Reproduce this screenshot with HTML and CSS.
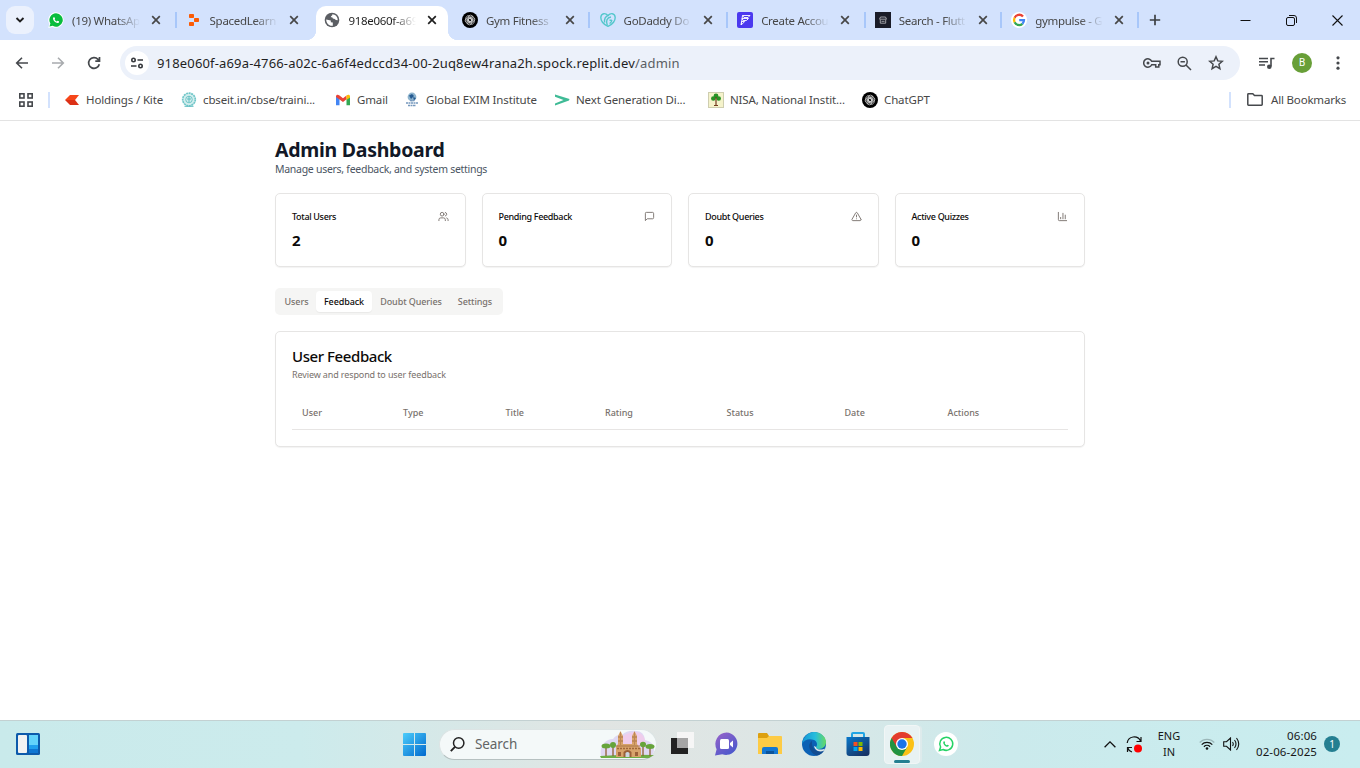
FILE: index.html
```html
<!DOCTYPE html>
<html lang="en">
<head>
<meta charset="utf-8">
<title>Admin Dashboard</title>
<link rel="stylesheet" href="styles.css">
</head>
<body>
<svg class="defs" width="0" height="0">
  <defs>
    <symbol id="x" viewBox="0 0 10 10"><path d="M1.200 1.200 8.800 8.800M8.800 1.200 1.200 8.800" fill="none" stroke="currentColor" stroke-width="1.700"/></symbol>
    <symbol id="phone" viewBox="0 0 24 24"><path d="M8.200 6.700c-.5 0-1.700.8-1.700 2.600 0 3.400 4.600 8.200 8.400 8.200 1.500 0 2.800-.9 2.800-2.300 0-.5-.1-.6-.5-.8l-2-.9c-.7-.2-1.100 1.200-1.700 1.100-.8-.2-3.800-2.500-4-3.700 0-.5.9-.9.7-1.500l-.9-2.200c-.1-.4-.6-.5-1.100-.5z" fill="currentColor"/></symbol>
    <symbol id="gpt" viewBox="0 0 16 16"><circle cx="8" cy="8" r="8" fill="#000"/><g fill="none" stroke="#dedede" stroke-width=".7"><rect x="6" y="3.200" width="5" height="6.400" rx="2.400"/><rect x="6" y="3.200" width="5" height="6.400" rx="2.400" transform="rotate(60 8 8)"/><rect x="6" y="3.200" width="5" height="6.400" rx="2.400" transform="rotate(120 8 8)"/><rect x="6" y="3.200" width="5" height="6.400" rx="2.400" transform="rotate(180 8 8)"/><rect x="6" y="3.200" width="5" height="6.400" rx="2.400" transform="rotate(240 8 8)"/><rect x="6" y="3.200" width="5" height="6.400" rx="2.400" transform="rotate(300 8 8)"/></g></symbol>
  </defs>
</svg>

<div class="tabstrip">
  <div class="tab-search"><svg width="10" height="10" viewBox="0 0 10 10"><path d="M1.500 3 5 6.500 8.500 3" fill="none" stroke="#1f1f1f" stroke-width="1.900"/></svg></div>
  <div class="tabs">
    <div class="tab">
      <svg class="fav" viewBox="0 0 16 16"><path d="M8 .3a7.700 7.700 0 1 1-3.500 14.600L.3 16l1.100-4A7.700 7.700 0 0 1 8 .3z" fill="#fff"/><path d="M8 1.300a6.700 6.700 0 1 1-3.300 12.500L1.500 14.600l.9-3.100A6.700 6.700 0 0 1 8 1.300z" fill="#09bd3d"/><svg x="1.500" y="1.500" width="13" height="13" color="#fff"><use href="#phone"/></svg></svg>
      <span class="tab-title">(19) WhatsAp</span><svg class="close"><use href="#x"/></svg>
    </div>
    <div class="tab sep">
      <svg class="fav" viewBox="0 0 16 16" fill="#fb5b05"><rect x="3" y="2" width="5" height="4" rx=".8"/><rect x="8" y="6" width="5" height="4" rx=".8"/><rect x="3" y="10" width="5" height="4" rx=".8"/></svg>
      <span class="tab-title">SpacedLearn</span><svg class="close"><use href="#x"/></svg>
    </div>
    <div class="tab mid active">
      <svg class="fav" viewBox="0 0 16 16"><circle cx="8" cy="8" r="7.300" fill="#5b5e63"/><path d="M2.200 7.500 4.500 8l2.300.5v1.700l2 .3v3.200c-3.500.6-6.600-2.200-6.600-6.200zM8.300 2.200c.5 1.600-1.500 1.300-1.500 3 1.300 0 2 .1 2 1.300l1.200.2c1.200 0 1 1.700 3.700 1.600.2-3.400-2.300-5.900-5.400-6.100z" fill="#fff"/></svg>
      <span class="tab-title">918e060f-a69</span><svg class="close"><use href="#x"/></svg>
    </div>
    <div class="tab mid"><svg class="fav"><use href="#gpt"/></svg><span class="tab-title">Gym Fitness</span><svg class="close"><use href="#x"/></svg></div>
    <div class="tab mid sep">
      <svg class="fav" viewBox="0 0 16 16" fill="none" stroke="#54c7cc" stroke-width="1.400"><path d="M8 14.300C3.200 12.500.4 8.500.9 4.800 1.400 1 5.500.7 8 3.600 10.500.7 14.600 1 15.100 4.800c.5 3.700-2.300 7.700-7.100 9.500z"/><path d="M4.600 10.500C4 7 6 4 8.800 2.800M7.300 13.500C5.500 9 7 5.500 11 5M11.800 8.200H9.500M11.800 8c0 1.600-.9 2.900-2.200 3.700"/></svg>
      <span class="tab-title">GoDaddy Do</span><svg class="close"><use href="#x"/></svg>
    </div>
    <div class="tab mid sep">
      <svg class="fav" viewBox="0 0 16 16"><rect width="16" height="16" rx="2" fill="#4b39ef"/><path d="M5.500 3.500h7.500l-2 2H7zM5 6.500h6.500l-2 2H6.200zM4.500 9.500h3.200l-3.500 3.500zM5.500 3.500 4.200 13" fill="none" stroke="#fff" stroke-width=".9"/></svg>
      <span class="tab-title">Create Accou</span><svg class="close"><use href="#x"/></svg>
    </div>
    <div class="tab mid sep">
      <svg class="fav" viewBox="0 0 16 16"><rect width="16" height="16" fill="#1a1c28"/><path d="M5.500 5h5l1 2.200h-7zM5.300 7.700v3.500h5.400V7.700M6.500 9.300h3" fill="none" stroke="#bfbfc3" stroke-width=".8"/></svg>
      <span class="tab-title">Search - Flutt</span><svg class="close"><use href="#x"/></svg>
    </div>
    <div class="tab sep last">
      <svg class="fav" viewBox="0 0 16 16"><circle cx="8" cy="8" r="8" fill="#fff"/><g fill="none" stroke-width="2.300"><path d="M12 4.600A5 5 0 0 0 3.600 5.700" stroke="#ea4335"/><path d="M3.600 5.700a5 5 0 0 0 0 4.600" stroke="#fbbc05"/><path d="M3.600 10.300a5 5 0 0 0 7.800 1.500" stroke="#34a853"/><path d="M11.400 11.800A5 5 0 0 0 13 8.100H8.200" stroke="#4285f4"/></g></svg>
      <span class="tab-title">gympulse - G</span><svg class="close"><use href="#x"/></svg>
    </div>
    <div class="newtab"><svg width="12" height="12" viewBox="0 0 12 12"><path d="M6 .8v10.400M.8 6h10.400" stroke="#3c4043" stroke-width="1.700"/></svg></div>
  </div>
  <div class="winctl">
    <svg width="11" height="11" viewBox="0 0 11 11"><path d="M.5 5.500h10" stroke="#111"/></svg>
    <svg width="11" height="11" viewBox="0 0 11 11" fill="none" stroke="#111"><rect x=".5" y="2.500" width="8" height="8" rx="1.500"/><path d="M3 .5h5a2.500 2.500 0 0 1 2.500 2.500v5"/></svg>
    <svg width="11" height="11" viewBox="0 0 11 11"><path d="m.5.5 10 10m0-10-10 10" stroke="#111" stroke-width="1.100"/></svg>
  </div>
</div>

<div class="toolbar">
  <div class="nav">
    <svg width="16" height="16" viewBox="0 0 16 16" fill="none" stroke="#45484c" stroke-width="1.600"><path d="M14 8H3M8 2.700 2.700 8 8 13.300"/></svg>
    <svg width="16" height="16" viewBox="0 0 16 16" fill="none" stroke="#a8abae" stroke-width="1.600"><path d="M2 8h11M8 2.700 13.300 8 8 13.300"/></svg>
    <svg width="16" height="16" viewBox="0 0 16 16" fill="none" stroke="#45484c" stroke-width="1.700"><path d="M13.300 9.200A5.400 5.400 0 1 1 12 4.300l1.300 1.400M13.500 2v4.200H9.300"/></svg>
  </div>
  <div class="omnibox">
    <div class="site"><svg width="14" height="14" viewBox="0 0 14 14" fill="none" stroke="#36393d" stroke-width="1.600"><circle cx="3.500" cy="4" r="1.700"/><path d="M7.500 4H13M1 10h5.500"/><circle cx="10.500" cy="10" r="1.700"/></svg></div>
    <div class="url">918e060f-a69a-4766-a02c-6a6f4edccd34-00-2uq8ew4rana2h.spock.replit.dev<span>/admin</span></div>
    <div class="omni-icons">
      <svg width="18" height="12" viewBox="0 0 18 12" fill="none" stroke="#45484c" stroke-width="1.500"><path d="M8.700 4.300H17v3.400h-1.200V10h-3.100V7.700h-4A4.200 4.200 0 1 1 8.700 4.300z"/><circle cx="5" cy="6" r="1.500" fill="#45484c" stroke="none"/></svg>
      <svg width="15" height="15" viewBox="0 0 15 15" fill="none" stroke="#45484c" stroke-width="1.500"><circle cx="5.700" cy="5.700" r="4.500"/><path d="m9 9 5 5M3.500 5.700h4.400"/></svg>
      <svg width="16" height="16" viewBox="0 0 16 16" fill="none" stroke="#45484c" stroke-width="1.500"><path d="m8 1.800 1.800 4.100 4.500.4-3.400 3 1 4.400L8 11.400l-3.900 2.300 1-4.400-3.400-3 4.500-.4z"/></svg>
    </div>
  </div>
  <svg class="media" width="16" height="13" viewBox="0 0 16 13" fill="none" stroke="#45484c" stroke-width="1.600"><path d="M0 1.500h9M0 4.700h9M0 8h6M12 9.500v-8h3.500"/><circle cx="10.300" cy="9.800" r="2.300" fill="#45484c" stroke="none"/></svg>
  <div class="avatar">B</div>
  <svg class="dots" width="4" height="14" viewBox="0 0 4 14" fill="#45484c"><circle cx="2" cy="1.800" r="1.600"/><circle cx="2" cy="7" r="1.600"/><circle cx="2" cy="12.200" r="1.600"/></svg>
</div>

<div class="bookmarks">
  <svg class="apps" width="14" height="14" viewBox="0 0 14 14" fill="none" stroke="#45484c" stroke-width="1.600"><rect x=".8" y=".8" width="4.200" height="4.200"/><rect x="9" y=".8" width="4.200" height="4.200"/><rect x=".8" y="9" width="4.200" height="4.200"/><rect x="9" y="9" width="4.200" height="4.200"/></svg>
  <div class="divider"></div>
  <div class="bm b1"><svg viewBox="0 0 16 16"><path d="M6 3h9l-4 5H1z" fill="#f6461a"/><path d="M1 8h10l4 5H6z" fill="#dc3016"/></svg><span>Holdings / Kite</span></div>
  <div class="bm b2"><svg viewBox="0 0 16 16"><circle cx="8" cy="7.500" r="6.300" fill="#d4eeee" stroke="#70c6c8" stroke-width="1.700" stroke-dasharray="2 .6"/><circle cx="8" cy="7.500" r="3.300" fill="none" stroke="#70c6c8"/><path d="M8 4v6M6 7h4M3.500 14.300h9" stroke="#5ebcc0"/></svg><span>cbseit.in/cbse/traini...</span></div>
  <div class="bm b3"><svg viewBox="0 0 16 16"><path d="M1 13.200V4l3.500 2.500v6.700z" fill="#4285f4"/><path d="M15 13.200V4l-3.500 2.500v6.700z" fill="#34a853"/><path d="M1 4.500C1 2.500 3 2.300 4.500 3.500L8 6.200l3.500-2.700v3.700L8 10 1 5z" fill="#ea4335"/><path d="M11.500 3.500c1.500-1.200 3.500-1 3.500 1v1l-3.500 2.600z" fill="#fbbc04"/></svg><span>Gmail</span></div>
  <div class="bm b4"><svg viewBox="0 0 16 16"><circle cx="8" cy="5" r="4.400" fill="#8eb4ce"/><path d="M5 3.500 8 2l2 2-3 3zM9 5l3 1-2 2.500z" fill="#255a91"/><path d="M2 11h12M4 13.500h8M6 8.500h5" stroke="#7698bd" stroke-width="1.400" stroke-dasharray="2 .5"/></svg><span>Global EXIM Institute</span></div>
  <div class="bm b5"><svg viewBox="0 0 16 16"><path d="M1 2.500 15.500 7 15 8.500 1 13.500v-2L9.500 8 1 4.800z" fill="#3fbb96"/></svg><span>Next Generation Di...</span></div>
  <div class="bm b6"><svg viewBox="0 0 16 16"><rect x=".5" y=".5" width="15" height="15" fill="#f5f3cb" stroke="#cfceb0"/><circle cx="8" cy="4" r="2.400" fill="#279225"/><circle cx="5.300" cy="6.500" r="2.300" fill="#279225"/><circle cx="10.700" cy="6.500" r="2.300" fill="#279225"/><path d="M8 5v8M6 13.500h4" stroke="#743c20" stroke-width="1.200"/></svg><span>NISA, National Instit...</span></div>
  <div class="bm b7"><svg><use href="#gpt"/></svg><span>ChatGPT</span></div>
  <div class="allbm"><svg width="16" height="13" viewBox="0 0 16 13" fill="none" stroke="#45484c" stroke-width="1.500"><path d="M.8 1.500c0-.4.300-.7.700-.7h4.300l1.700 1.800h7c.4 0 .7.300.7.700v8.200c0 .4-.3.700-.7.700h-13c-.4 0-.7-.3-.7-.7z"/></svg><span>All Bookmarks</span></div>
</div>

<main class="page">
  <h1>Admin Dashboard</h1>
  <p class="sub">Manage users, feedback, and system settings</p>
  <div class="stats">
    <div class="card stat"><div class="stat-head"><span>Total Users</span><svg viewBox="0 0 24 24"><path d="M16 21v-2a4 4 0 0 0-4-4H6a4 4 0 0 0-4 4v2"/><circle cx="9" cy="7" r="4"/><path d="M22 21v-2a4 4 0 0 0-3-3.870M16 3.130a4 4 0 0 1 0 7.750"/></svg></div><b>2</b></div>
    <div class="card stat"><div class="stat-head"><span>Pending Feedback</span><svg viewBox="0 0 24 24"><path d="M21 15a2 2 0 0 1-2 2H7l-4 4V5a2 2 0 0 1 2-2h14a2 2 0 0 1 2 2z"/></svg></div><b>0</b></div>
    <div class="card stat"><div class="stat-head"><span>Doubt Queries</span><svg viewBox="0 0 24 24"><path d="m21.730 18-8-14a2 2 0 0 0-3.480 0l-8 14A2 2 0 0 0 4 21h16a2 2 0 0 0 1.730-3M12 9v4M12 17h.01"/></svg></div><b>0</b></div>
    <div class="card stat"><div class="stat-head"><span>Active Quizzes</span><svg viewBox="0 0 24 24"><path d="M3 3v16a2 2 0 0 0 2 2h16M18 17V9M13 17V5M8 17v-3"/></svg></div><b>0</b></div>
  </div>
  <div class="seg"><span class="g1">Users</span><span class="g2 on">Feedback</span><span class="g3">Doubt Queries</span><span class="g4">Settings</span></div>
  <section class="card feedback">
    <h2>User Feedback</h2>
    <p>Review and respond to user feedback</p>
    <div class="thead"><span>User</span><span>Type</span><span>Title</span><span>Rating</span><span>Status</span><span>Date</span><span>Actions</span></div>
  </section>
</main>

<footer class="taskbar">
  <svg class="widgets" width="24" height="22" viewBox="0 0 24 22"><rect width="24" height="22" rx="1.500" fill="#0d5aab"/><rect x="2" y="2" width="9" height="18" rx="1" fill="#f2f2f2"/><path d="M13 2h9v10h-9z" fill="#62d3fb"/><path d="M13 12h9v4h-9z" fill="#20a0ee"/><path d="M13 16h9v4h-9z" fill="#0e76d3"/></svg>
  <div class="center">
    <svg class="start" width="23" height="23" viewBox="0 0 23 23"><defs><linearGradient id="wg" x2="1" y2="1"><stop stop-color="#4ccdfb"/><stop offset="1" stop-color="#0069ce"/></linearGradient></defs><path d="M0 1q0-1 1-1h10v11H0zM12 0h10q1 0 1 1v10H12zM0 12h11v11H1q-1 0-1-1zM12 12h11v10q0 1-1 1H12z" fill="url(#wg)"/></svg>
    <div class="search">
      <svg width="15" height="15" viewBox="0 0 15 15" fill="none" stroke="#222" stroke-width="1.500"><circle cx="8.700" cy="6" r="5.200"/><path d="M5 9.800.8 14.200" stroke-width="1.900"/></svg>
      <span>Search</span>
      <svg class="castle" width="56" height="29" viewBox="0 0 56 29">
        <path d="M1 26C-1 17 5 9 13 9q4-5 9-4 5-5 14-4 8 0 9 9 9 2 9 9 0 6-5 7z" fill="#dfd8f3"/><path d="M19 18q0-15 16-16 10 0 11 14z" fill="#efcdec"/>
        <path d="M0 26q28-2 54-1l-5 3H1z" fill="#6dae45"/>
        <path d="M16 27V17l2-3V6l2.500-5L23 6v8h9V6l2.500-5L37 6v8l2 3 2 1v9z" fill="#d8a36b"/>
        <path d="M18 7h5M18 11h5M32 7h5M32 11h5M16 16h24" stroke="#a87446" stroke-width="1"/><path d="M17 18.500h23" stroke="#a0673a" stroke-width="1.500" stroke-dasharray="2 1"/>
        <path d="M20.500 2v13M34.500 2v13" stroke="#bd8653"/>
        <path d="M23.500 27v-5q4-4 8 0v5zM18 26v-4h3v4zM35 26v-4h3v4z" fill="#9b6038"/><path d="M25.500 27v-4q2-2 4 0v4z" fill="#cbd5df"/>
        <path d="M6 17v9M13 17v9M43 17v9M50 17v9" stroke="#8f6034" stroke-width="1.300"/><g fill="#66a43b"><ellipse cx="6" cy="16" rx="4.500" ry="2.500"/><ellipse cx="13" cy="15" rx="3" ry="3"/><ellipse cx="43" cy="14.500" rx="3" ry="2.800"/><ellipse cx="50" cy="16.500" rx="4.500" ry="2.500"/></g>
      </svg>
    </div>
    <svg class="tb taskview" viewBox="0 0 24 24"><path d="M1 6h17v16H1z" fill="#222"/><path d="M7 0h17v16H7z" fill="#f6f6f6"/><path d="M7 6h11v10H7z" fill="#a5a5a5"/></svg>
    <svg class="tb" viewBox="0 0 24 24"><defs><linearGradient id="mg" x2=".7" y2="1"><stop stop-color="#9a63c9"/><stop offset="1" stop-color="#4a58cc"/></linearGradient></defs><path d="M12.500.5a11.200 11.200 0 1 1-4.200 21.700L1 23.500l1.600-6.300A11.500 11.500 0 0 1 12.500.5z" fill="url(#mg)"/><rect x="6" y="7" width="9" height="10" rx="1.500" fill="#fff"/><path d="m16 11 3-2.500v7L16 13z" fill="#fff"/></svg>
    <svg class="tb" viewBox="0 0 24 24"><path d="M0 2q0-1 1-1h8l2 3h12v6H0z" fill="#dda010"/><path d="M0 6h9l2-2h12q1 0 1 1v17H0z" fill="#fdcb45"/><path d="M4 22v-5q0-2 2-2h12q2 0 2 2v5z" fill="#1477d2"/><path d="M8 22v-3h8v3z" fill="#0b539b"/></svg>
    <svg class="tb" viewBox="0 0 24 24"><defs><linearGradient id="eg"><stop stop-color="#1594d3"/><stop offset=".55" stop-color="#26bddd"/><stop offset="1" stop-color="#68da61"/></linearGradient></defs><circle cx="12" cy="12" r="12" fill="#0c61b5"/><path d="M0 12C1 5 6 0 12 0c7 0 12 5 12 10 0 4-3 7-7 7-2 0-4-1-3-2 2-2 1-6-2-7C7 6 2 8 0 12z" fill="url(#eg)"/><path d="M10 9c-6 4-1 13 5 14.500 3-.5 6-2.500 7-5.500-6 3-13 0-12-9z" fill="#124c91"/><path d="M14 15c-.5 2.500 6 3.500 9 1.500l-.8 2C17 21 12.500 18 12 14z" fill="#e0e8e9"/></svg>
    <svg class="tb" viewBox="0 0 24 24"><defs><linearGradient id="sg" x2=".7" y2="1"><stop stop-color="#0878cb"/><stop offset="1" stop-color="#173466"/></linearGradient></defs><path d="M6 6V2q0-1 1-1h10q1 0 1 1v4" fill="none" stroke="#21a5e5" stroke-width="2"/><path d="M.5 5h23v16q0 3-3 3h-17q-3 0-3-3z" fill="url(#sg)"/><path d="M7.500 10h4v4h-4z" fill="#f25022"/><path d="M12.500 10h4v4h-4z" fill="#7fba00"/><path d="M7.500 15h4v4h-4z" fill="#00a4ef"/><path d="M12.500 15h4v4h-4z" fill="#ffb900"/></svg>
    <div class="chrome"><svg class="tb" viewBox="0 0 24 24"><circle cx="12" cy="12" r="12" fill="#fbc116"/><path d="M12 12 1.600 6A12 12 0 0 0 12 24l5.200-9z" fill="#229342"/><path d="M1.600 6A12 12 0 0 1 22.400 6H12v6L6.800 15z" fill="#e33b2e"/><circle cx="12" cy="12" r="6" fill="#fff"/><circle cx="12" cy="12" r="4.700" fill="#1a73e8"/></svg></div>
    <svg class="tb wa" viewBox="0 0 24 24"><circle cx="12" cy="12" r="12" fill="#fff"/><path d="M5.500 18.500 6.600 15a6.500 6.500 0 1 1 2.500 2.500z" fill="none" stroke="#25d366" stroke-width="1.500"/><svg x="6" y="6" width="12" height="12" viewBox="0 0 24 24" color="#25d366"><use href="#phone"/></svg></svg>
  </div>
  <div class="tray">
    <svg class="up" width="12" height="7" viewBox="0 0 12 7"><path d="M.6 6.300 6 .9l5.400 5.400" fill="none" stroke="#111" stroke-width="1.300"/></svg>
    <svg class="sync" width="17" height="17" viewBox="0 0 17 17" fill="none" stroke="#111" stroke-width="1.200"><path d="M1.200 7A7 7 0 0 1 14.500 5M15 1v4.500h-4.500M6 16a7 7 0 0 1-4.500-4.500M6 11.500H1.500V16"/><circle cx="12" cy="12.500" r="4" fill="#f00" stroke="none"/></svg>
    <div class="lang"><span>ENG</span><span>IN</span></div>
    <svg class="wifi" width="16" height="12" viewBox="0 0 16 12" fill="none" stroke="#111" stroke-width="1.200"><path d="M.7 4.500a10 10 0 0 1 14.600 0" stroke="#9cb7b9"/><path d="M2.700 6.700a7.400 7.400 0 0 1 10.600 0M4.900 8.700a4.400 4.400 0 0 1 6.200 0"/><circle cx="8" cy="10.500" r="1.300" fill="#111" stroke="none"/></svg>
    <svg class="vol" width="17" height="14" viewBox="0 0 17 14" fill="none" stroke="#111" stroke-width="1.100"><path d="M.7 4.700h2.800L7.500 1v12L3.500 9.300H.7zM9.500 5q1.500 2 0 4M11.500 3q3 4 0 8M13.500 1q4.500 6 0 12"/></svg>
    <div class="clock"><span>06:06</span><span>02-06-2025</span></div>
    <div class="badge">1</div>
  </div>
</footer>
</body>
</html>
```

FILE: styles.css
```css
* { box-sizing: border-box; }
body { margin: 0; width: 1360px; height: 768px; overflow: hidden; display: flex; flex-direction: column; background: #fff; font-family: "Noto Sans", "Open Sans", sans-serif; font-size: 12px; color: #1f1f1f; }
svg { display: block; flex: none; }
span { white-space: nowrap; }
.defs { position: absolute; }

.tabstrip { height: 40px; flex: none; background: #d3e2fd; display: flex; }
.tab-search { width: 28px; height: 28px; margin: 6px 4px 0 6px; border-radius: 9px; background: #ebf1fd; display: flex; align-items: center; justify-content: center; }
.tabs { display: flex; width: 1160px; }
.tab { width: 137.600px; height: 40px; display: flex; align-items: center; padding-left: 10px; position: relative; color: #474747; font-size: 11.500px; letter-spacing: -.3px; }
.mid { padding-left: 11.200px; }
.fav { width: 16px; height: 16px; margin-right: 8px; }
.tab-title { width: 68px; overflow: hidden; mask-image: linear-gradient(90deg, #000 65%, transparent 100%); }
.close { width: 10px; height: 10px; margin-left: 11px; }
.sep::before { content: ""; position: absolute; left: -1px; top: 12px; width: 2px; height: 16px; background: #a8c7fa; }
.mid.sep::before { left: 0; }
.active { color: #1f1f1f; }
.active > * { z-index: 1; position: relative; }
.active::before { content: ""; position: absolute; left: 3px; right: 3px; top: 6px; bottom: 0; background: #fff; border-radius: 10px 10px 0 0; }
.active::after { content: ""; position: absolute; left: -7px; right: -7px; bottom: 0; height: 10px; background: radial-gradient(circle at 0 0, transparent 10px, #fff 10.500px) left / 10px 10px no-repeat, radial-gradient(circle at 100% 0, transparent 10px, #fff 10.500px) right / 10px 10px no-repeat; }
.newtab { padding: 14px 0 0 10px; position: relative; }
.newtab::before { content: ""; position: absolute; left: -2px; top: 12px; width: 2px; height: 16px; background: #a8c7fa; }
.winctl { display: flex; gap: 35px; padding: 15px 0 0 42px; }

.toolbar { height: 46px; flex: none; display: flex; align-items: center; padding-left: 14px; }
.nav { display: flex; gap: 20px; width: 106px; }
.omnibox { width: 1120px; height: 34px; border-radius: 17px; background: #ecf1fa; display: flex; align-items: center; padding-left: 5px; }
.site { width: 24px; height: 24px; border-radius: 12px; background: #fff; display: flex; align-items: center; justify-content: center; }
.url { margin-left: 8px; width: 986px; font-size: 13px; letter-spacing: .16px; color: #1f1f1f; white-space: nowrap; }
.url span { color: #5a5e63; }
.omni-icons { display: flex; align-items: center; gap: 16px; }
.media { margin-left: 19px; }
.avatar { width: 20px; height: 20px; border-radius: 50%; background: #689f38; color: #fff; font: 10px/20px Roboto, sans-serif; text-align: center; margin-left: 17px; }
.dots { margin-left: 24px; }

.bookmarks { height: 35px; flex: none; border-bottom: 1px solid #e3e3e3; display: flex; align-items: center; padding: 0 14px 7px 19px; color: #474747; font-size: 11.500px; letter-spacing: -.14px; }
.divider { width: 2px; height: 16px; margin: 0 14px 0 15px; background: #d3e2fd; }
.bm { display: flex; align-items: center; gap: 6px; }
.bm svg { width: 16px; height: 16px; }
.b1 { width: 117px; } .b2 { width: 154px; } .b3 { width: 69px; } .b4 { width: 150px; } .b5 { width: 154px; } .b6 { width: 154px; }
.allbm { margin-left: auto; border-left: 2px solid #d3e2fd; height: 16px; padding-left: 16px; display: flex; align-items: center; gap: 8px; letter-spacing: -.19px; }

.page { width: 810px; margin: 0 auto; flex: 1; padding-top: 17px; }
h1 { margin: 0; font-size: 19.500px; line-height: 24px; font-weight: 700; letter-spacing: -.27px; color: #111827; }
.sub { margin: 1px 0 0; font-size: 10.500px; line-height: 13px; letter-spacing: -.28px; color: #4b5563; white-space: nowrap; }
.stats { display: grid; grid-template-columns: repeat(4, 1fr); gap: 16px; margin-top: 17px; }
.card { border: 1px solid #e6e5e4; border-radius: 5px; background: #fff; box-shadow: 0 1px 1px rgba(0,0,0,.05); }
.stat { height: 74px; padding: 16px; }
.stat-head { display: flex; justify-content: space-between; align-items: center; height: 13px; font-size: 9px; font-weight: 500; letter-spacing: -.33px; color: #0c0a09; }
.stat-head svg { width: 11px; height: 11px; fill: none; stroke: #78716c; stroke-width: 2; stroke-linecap: round; stroke-linejoin: round; }
.stat b { display: block; font-size: 15px; line-height: 20px; margin-top: 7px; color: #0c0a09; }
.seg { display: flex; width: 228px; height: 27px; margin-top: 21px; padding: 3px 2px; background: #f5f5f4; border-radius: 5px; font-size: 9px; line-height: 21px; font-weight: 500; letter-spacing: -.09px; color: #78716c; }
.seg span { text-align: center; border-radius: 4px; }
.g1 { width: 39px; } .g2 { width: 56px; } .g3 { width: 78px; } .g4 { width: 50px; }
.seg .on { background: #fff; color: #0c0a09; box-shadow: 0 1px 1px rgba(0,0,0,.05); }
.feedback { height: 116px; margin-top: 16px; padding: 16px; }
h2 { margin: 0; font-size: 15px; line-height: 17px; font-weight: 500; letter-spacing: -.42px; color: #0c0a09; }
.feedback p { margin: 3px 0 0; font-size: 9px; line-height: 14px; letter-spacing: -.12px; color: #78716c; white-space: nowrap; }
.thead { display: grid; grid-template-columns: 101px 102.500px 99.500px 121.500px 118px 103px auto; margin-top: 15px; height: 33px; line-height: 32px; padding-left: 10px; border-bottom: 1px solid #e7e5e4; font-size: 9px; font-weight: 500; color: #78716c; }

.taskbar { height: 48px; flex: none; border-top: 1px solid #c3d1d2; background: linear-gradient(90deg, #c9eaeb 0, #ccebec 22%, #e1e5e3 44%, #dde6e5 56%, #cbeaec 74%, #c9edef 100%); display: flex; align-items: center; padding: 0 0 1px 16px; }
.center { display: flex; align-items: center; margin-left: 363px; height: 46px; }
.search { width: 218px; height: 31px; margin: 0 13px 0 13px; border-radius: 16px; background: #f4f9f9; border: 1px solid #dce4e4; border-bottom-color: #b6c1c1; display: flex; align-items: center; padding-left: 10px; font-size: 13.500px; letter-spacing: -.1px; color: #626565; }
.search span { margin-left: 10px; width: 128px; }
.tb { width: 24px; height: 24px; margin-right: 20px; }
.chrome { width: 36px; height: 39px; margin-left: -6px; margin-right: 14px; border: 1px solid #f1f6f6; border-radius: 4px; background: #e8f2f3; display: flex; flex-direction: column; align-items: center; justify-content: space-between; padding-top: 6px; box-shadow: 3px 0 0 -1px #deebec; }
.chrome .tb { margin: 0; }
.chrome::after { content: ""; width: 16px; height: 3px; border-radius: 2px; background: #247f91; }
.tray { display: flex; align-items: center; margin-left: auto; padding-right: 20px; color: #171717; font-size: 11px; line-height: 16px; }
.up { margin-right: 10px; }
.sync { margin-right: 13px; }
.lang { display: flex; flex-direction: column; align-items: center; width: 26px; margin-right: 17px; }
.wifi { margin-right: 8px; }
.vol { margin-right: 12px; }
.clock { display: flex; flex-direction: column; align-items: flex-end; width: 65px; margin-right: 7px; font-size: 11.500px; letter-spacing: .1px; }
.badge { width: 16px; height: 16px; border-radius: 8px; background: #247f91; color: #fff; font-size: 10px; text-align: center; }
```
